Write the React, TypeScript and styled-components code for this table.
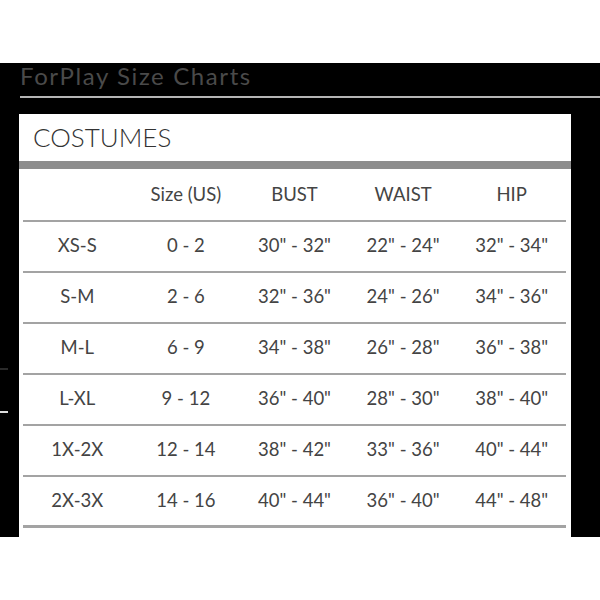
import styled, { createGlobalStyle } from "styled-components";

const GlobalStyle = createGlobalStyle`
  html, body {
    margin: 0;
    padding: 0;
    background: #fff;
    font-family: "Lato", "Open Sans", sans-serif;
  }
`;

const rows = [
  ["XS-S", "0 - 2", '30" - 32"', '22" - 24"', '32" - 34"'],
  ["S-M", "2 - 6", '32" - 36"', '24" - 26"', '34" - 36"'],
  ["M-L", "6 - 9", '34" - 38"', '26" - 28"', '36" - 38"'],
  ["L-XL", "9 - 12", '36" - 40"', '28" - 30"', '38" - 40"'],
  ["1X-2X", "12 - 14", '38" - 42"', '33" - 36"', '40" - 44"'],
  ["2X-3X", "14 - 16", '40" - 44"', '36" - 40"', '44" - 48"'],
];

const headers = ["", "Size (US)", "BUST", "WAIST", "HIP"];

export default function App() {
  return (
    <>
      <GlobalStyle />
      <Page>
        <Frame>
          <EdgeMark $top={305} $color="#2a2a2a" />
          <EdgeMark $top={348} $color="#ddd" />
          <Title>ForPlay Size Charts</Title>
          <TitleRule />
          <Panel>
            <PanelHeader>COSTUMES</PanelHeader>
            <HeaderBar />
            <Table>
              <Row $head>
                {headers.map((h, i) => (
                  <Cell key={i}>{h}</Cell>
                ))}
              </Row>
              {rows.map((r, ri) => (
                <Row key={ri} $last={ri === rows.length - 1}>
                  {r.map((c, ci) => (
                    <Cell key={ci}>{c}</Cell>
                  ))}
                </Row>
              ))}
            </Table>
          </Panel>
        </Frame>
      </Page>
    </>
  );
}

const Page = styled.div`
  width: 600px;
  height: 600px;
  padding-top: 63px;
  box-sizing: border-box;
  background: #fff;
`;

const Frame = styled.div`
  position: relative;
  background: #000;
  height: 474px;
  display: flex;
  flex-direction: column;
  padding-left: 19px;
  box-sizing: border-box;
`;

const EdgeMark = styled.div<{ $top: number; $color: string }>`
  position: absolute;
  left: 0;
  top: ${({ $top }) => $top}px;
  width: 8px;
  height: 2px;
  background: ${({ $color }) => $color};
`;

const Title = styled.div`
  height: 33px;
  line-height: 25px;
  padding-left: 1px;
  font-size: 24px;
  letter-spacing: 1.6px;
  color: #4a4a4a;
`;

const TitleRule = styled.div`
  height: 2px;
  margin-left: 1px;
  background: #b4b4b4;
`;

const Panel = styled.div`
  margin-top: 16px;
  width: 552px;
  flex: 1;
  background: #fff;
  display: flex;
  flex-direction: column;
`;

const PanelHeader = styled.div`
  height: 47px;
  line-height: 46px;
  padding-left: 14px;
  font-size: 26px;
  font-weight: 300;
  color: #333;
`;

const HeaderBar = styled.div`
  height: 8px;
  background: #8d8d8d;
`;

const Table = styled.div`
  margin: 0 5px 0 4px;
  display: flex;
  flex-direction: column;
`;

const Row = styled.div<{ $last?: boolean; $head?: boolean }>`
  display: grid;
  grid-template-columns: repeat(5, 1fr);
  height: ${({ $head }) => ($head ? "53px" : "51px")};
  padding-bottom: ${({ $head }) => ($head ? "1px" : "3px")};
  align-items: center;
  border-bottom: ${({ $last }) => ($last ? "3px" : "2px")} solid #a3a3a3;
  box-sizing: border-box;
`;

const Cell = styled.div`
  text-align: center;
  font-size: 18.5px;
  color: #444;
`;
